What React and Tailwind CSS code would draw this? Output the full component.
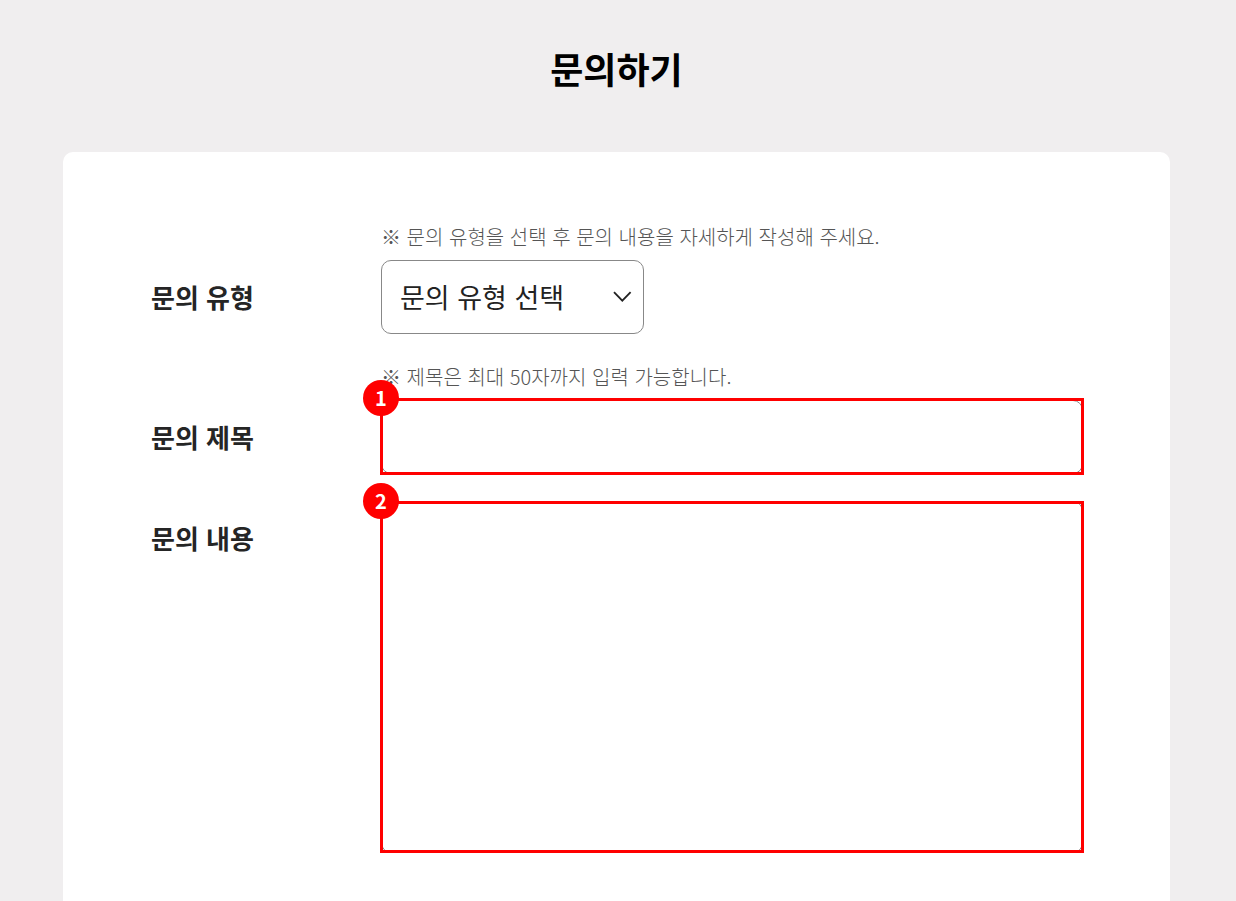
function Hint({ id, children }) {
  return (
    <p id={id} className="mb-[7px] text-xl leading-8 font-light text-[#555555]">
      {children}
    </p>
  );
}

function Row({ htmlFor, label, hint, children }) {
  return (
    <div className="grid grid-cols-[230px_minmax(0,1fr)]">
      {hint && <div className="col-start-2">{hint}</div>}
      <label
        htmlFor={htmlFor}
        className="col-start-1 flex h-[72px] items-center text-[26px] font-bold text-[#252525]"
      >
        {label}
      </label>
      <div className="relative">{children}</div>
    </div>
  );
}

function Marker({ number }) {
  return (
    <span className="absolute -top-[21px] -left-5 flex size-9 items-center justify-center rounded-full bg-[#ff0000] text-xl font-bold text-white">
      {number}
    </span>
  );
}

export default function App() {
  return (
    <main
      lang="ko"
      className="flex min-h-screen flex-col bg-[#f0eeef] pr-[66px] pl-[63px] font-['Noto_Sans_CJK_KR',sans-serif]"
    >
      <h1 className="pt-[42px] pb-[58px] text-center text-4xl leading-[52px] font-bold text-black">
        문의하기
      </h1>
      <form className="flex grow flex-col gap-[27px] rounded-t-[10px] bg-white pt-[69px] pr-[87px] pb-12 pl-[88px]">
        <Row
          htmlFor="type"
          label="문의 유형"
          hint={<Hint id="type-hint">※ 문의 유형을 선택 후 문의 내용을 자세하게 작성해 주세요.</Hint>}
        >
          <div className="relative w-[263px]">
            <select
              id="type"
              aria-describedby="type-hint"
              className="block h-[74px] w-full appearance-none rounded-[10px] border border-[#888888] bg-white pl-[18px] text-[27px] text-[#222222]"
            >
              <option>문의 유형 선택</option>
            </select>
            <svg
              viewBox="0 0 20 12"
              fill="none"
              stroke="currentColor"
              strokeWidth="1.8"
              className="pointer-events-none absolute top-[31px] right-3 h-3 w-5 text-[#222222]"
              aria-hidden="true"
            >
              <path d="M2 1 L10.3 9.6 L18.6 1" />
            </svg>
          </div>
        </Row>
        <Row
          htmlFor="title"
          label="문의 제목"
          hint={<Hint id="title-hint">※ 제목은 최대 50자까지 입력 가능합니다.</Hint>}
        >
          <input
            id="title"
            type="text"
            maxLength={50}
            aria-describedby="title-hint"
            className="block h-[74px] w-full rounded-[10px] border border-[#888888] px-5 text-[27px]"
          />
          <div className="pointer-events-none absolute -inset-x-px -top-0.5 -bottom-px border-3 border-[#ff0000]">
            <Marker number={1} />
          </div>
        </Row>
        <Row htmlFor="content" label="문의 내용">
          <textarea
            id="content"
            className="block h-[352px] w-full resize-none rounded-[10px] border border-[#888888] p-5 text-[27px]"
          />
          <div className="pointer-events-none absolute -inset-x-px inset-y-0 border-3 border-[#ff0000]">
            <Marker number={2} />
          </div>
        </Row>
      </form>
    </main>
  );
}
